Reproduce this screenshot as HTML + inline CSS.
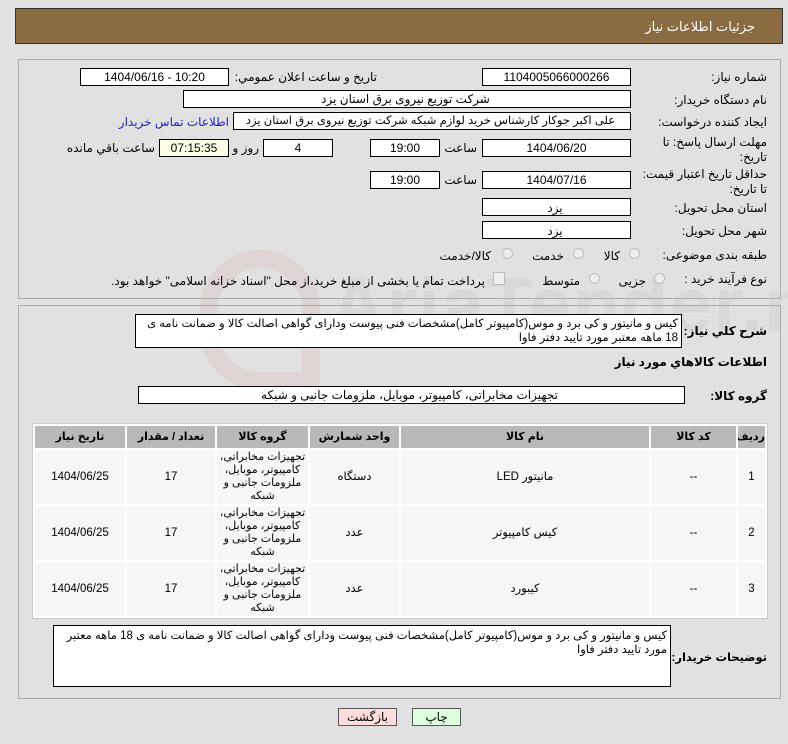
<!DOCTYPE html>
<html><head><meta charset="utf-8">
<style>
body{margin:0;width:788px;height:744px;background:#e1e1e1;font-family:"Liberation Sans","DejaVu Sans",sans-serif;font-size:12px;color:#000;position:relative;overflow:hidden}
.a{position:absolute;white-space:nowrap}
.r{direction:rtl;text-align:right}
.box{position:absolute;background:#fff;border:1px solid #000;box-sizing:border-box;text-align:center;line-height:16px;font-size:12px;overflow:hidden;white-space:nowrap}
.lbl{position:absolute;direction:rtl;white-space:nowrap;font-size:12px}
.rad{position:absolute;width:11px;height:11px;border-radius:50%;border:1px solid #bbb;background:#eee;box-sizing:border-box}
table{border-collapse:separate;border-spacing:2px;position:absolute;left:32px;top:423px;width:736px;direction:rtl;background:#fff;border:1px solid #ccc;table-layout:fixed}
td,th{background:#f6f6f6;text-align:center;font-size:11.5px;line-height:13px;padding:0;overflow:hidden}
th{background:#b9b9b9;height:22px;font-weight:bold;font-size:11px}
td{height:54px}
td div{max-height:52px;overflow:hidden;font-size:11px;line-height:13px}
</style></head><body>
<div class="a" style="left:0;top:0;width:788px;height:744px;overflow:hidden">
 <div class="a" style="left:200px;top:250px;width:120px;height:140px;border:18px solid rgba(210,120,120,0.12);border-radius:60px 60px 10px 60px;box-sizing:border-box"></div>
 <div class="a" style="left:330px;top:262px;font:bold 76px 'Liberation Sans',sans-serif;color:rgba(120,120,120,0.08);letter-spacing:2px">AriaTender.net</div>
</div>
<div class="a" style="left:15px;top:8px;width:768px;height:36px;background:#8b6b42;border:1px solid #333;box-sizing:border-box"></div>
<div class="lbl" style="right:33px;top:19px;color:#fff;font-size:13px">جزئیات اطلاعات نیاز</div>

<div class="a" style="left:18px;top:59px;width:763px;height:240px;border:1px solid #aaa;box-sizing:border-box"></div>

<div class="lbl" style="right:21px;top:70px">شماره نیاز:</div>
<div class="box" style="left:482px;top:68px;width:149px;height:18px">1104005066000266</div>
<div class="lbl" style="right:411px;top:70px">تاریخ و ساعت اعلان عمومي:</div>
<div class="box" style="left:80px;top:68px;width:149px;height:18px">1404/06/16 - 10:20</div>

<div class="lbl" style="right:21px;top:93px">نام دستگاه خریدار:</div>
<div class="box r" style="left:183px;top:90px;width:448px;height:18px;padding-right:3px">شرکت توزیع نیروی برق استان یزد</div>

<div class="lbl" style="right:21px;top:115px">ایجاد کننده درخواست:</div>
<div class="box r" style="left:233px;top:112px;width:398px;height:18px;padding-right:3px;font-size:11.5px">علی اکبر  جوکار  کارشناس خرید لوازم شبکه  شرکت توزیع نیروی برق استان یزد</div>
<div class="lbl" style="right:559px;top:115px;color:#2222cc">اطلاعات تماس خریدار</div>

<div class="lbl" style="right:21px;top:135px;line-height:15px">مهلت ارسال پاسخ: تا<br>تاریخ:</div>
<div class="box" style="left:482px;top:139px;width:149px;height:18px">1404/06/20</div>
<div class="lbl" style="right:311px;top:141px">ساعت</div>
<div class="box" style="left:370px;top:139px;width:70px;height:18px">19:00</div>
<div class="box" style="left:263px;top:139px;width:70px;height:18px">4</div>
<div class="lbl" style="right:529px;top:141px">روز و</div>
<div class="box" style="left:159px;top:139px;width:70px;height:18px;background:#ffffe8">07:15:35</div>
<div class="lbl" style="right:633px;top:141px">ساعت باقي مانده</div>

<div class="lbl" style="right:21px;top:167px;line-height:15px">حداقل تاریخ اعتبار قیمت:<br>تا تاریخ:</div>
<div class="box" style="left:482px;top:171px;width:149px;height:18px">1404/07/16</div>
<div class="lbl" style="right:311px;top:173px">ساعت</div>
<div class="box" style="left:370px;top:171px;width:70px;height:18px">19:00</div>

<div class="lbl" style="right:21px;top:201px">استان محل تحویل:</div>
<div class="box r" style="left:482px;top:198px;width:149px;height:18px;padding:1px 3px 0 0">یزد</div>
<div class="lbl" style="right:21px;top:224px">شهر محل تحویل:</div>
<div class="box r" style="left:482px;top:221px;width:149px;height:18px;padding:1px 3px 0 0">یزد</div>

<div class="lbl" style="right:21px;top:248px">طبقه بندی موضوعی:</div>
<div class="rad" style="left:629px;top:248px"></div><div class="lbl" style="right:168px;top:249px">کالا</div>
<div class="rad" style="left:573px;top:248px"></div><div class="lbl" style="right:224px;top:249px">خدمت</div>
<div class="rad" style="left:502px;top:248px"></div><div class="lbl" style="right:297px;top:249px">کالا/خدمت</div>

<div class="lbl" style="right:21px;top:272px">نوع فرآیند خرید :</div>
<div class="rad" style="left:654px;top:273px"></div><div class="lbl" style="right:142px;top:274px">جزیی</div>
<div class="rad" style="left:589px;top:273px"></div><div class="lbl" style="right:208px;top:274px">متوسط</div>
<div class="a" style="left:493px;top:272px;width:10px;height:11px;border:1px solid #bbb;background:#eee"></div>
<div class="lbl" style="right:303px;top:274px">پرداخت تمام یا بخشی از مبلغ خرید،از محل "اسناد خزانه اسلامی" خواهد بود.</div>

<div class="a" style="left:18px;top:305px;width:763px;height:394px;border:1px solid #aaa;box-sizing:border-box"></div>
<div class="lbl" style="right:21px;top:324px;font-weight:bold">شرح کلي نياز:</div>
<div class="box r" style="left:135px;top:314px;width:547px;height:34px;text-align:right;padding:2px 3px;line-height:14px;font-size:11.5px;white-space:normal">کیس و مانیتور و کی برد و موس(کامپیوتر کامل)مشخصات فنی پیوست ودارای گواهی اصالت کالا و ضمانت نامه ی 18 ماهه معتبر مورد تایید دفتر فاوا</div>
<div class="lbl" style="right:21px;top:355px;font-weight:bold">اطلاعات کالاهاي مورد نياز</div>
<div class="lbl" style="right:21px;top:389px;font-weight:bold">گروه کالا:</div>
<div class="box r" style="left:138px;top:386px;width:547px;height:18px;padding-right:4px">تجهیزات مخابراتی، کامپیوتر، موبایل، ملزومات جانبی و شبکه</div>

<table>
<tr><th style="width:27px">ردیف</th><th style="width:85px">کد کالا</th><th style="width:248px">نام کالا</th><th style="width:89px">واحد شمارش</th><th style="width:91px">گروه کالا</th><th style="width:88px">تعداد / مقدار</th><th>تاریخ نیاز</th></tr>
<tr><td>1</td><td>--</td><td>مانیتور LED</td><td>دستگاه</td><td><div>تجهیزات مخابراتی، کامپیوتر، موبایل، ملزومات جانبی و شبکه</div></td><td>17</td><td>1404/06/25</td></tr>
<tr><td>2</td><td>--</td><td>کیس کامپیوتر</td><td>عدد</td><td><div>تجهیزات مخابراتی، کامپیوتر، موبایل، ملزومات جانبی و شبکه</div></td><td>17</td><td>1404/06/25</td></tr>
<tr><td>3</td><td>--</td><td>کیبورد</td><td>عدد</td><td><div>تجهیزات مخابراتی، کامپیوتر، موبایل، ملزومات جانبی و شبکه</div></td><td>17</td><td>1404/06/25</td></tr>
</table>

<div class="lbl" style="right:21px;top:650px;font-weight:bold;font-size:11.5px">توضیحات خریدار:</div>
<div class="box r" style="left:53px;top:625px;width:618px;height:62px;text-align:right;padding:3px 3px;line-height:14px;font-size:11.5px;white-space:normal">کیس و مانیتور و کی برد و موس(کامپیوتر کامل)مشخصات فنی پیوست ودارای گواهی اصالت کالا و ضمانت نامه ی 18 ماهه معتبر مورد تایید دفتر فاوا</div>

<div class="box" style="left:338px;top:708px;width:59px;height:18px;background:#fdd;border-color:#555">بازگشت</div>
<div class="box" style="left:412px;top:708px;width:49px;height:18px;background:#dfd;border-color:#555">چاپ</div>
</body></html>
